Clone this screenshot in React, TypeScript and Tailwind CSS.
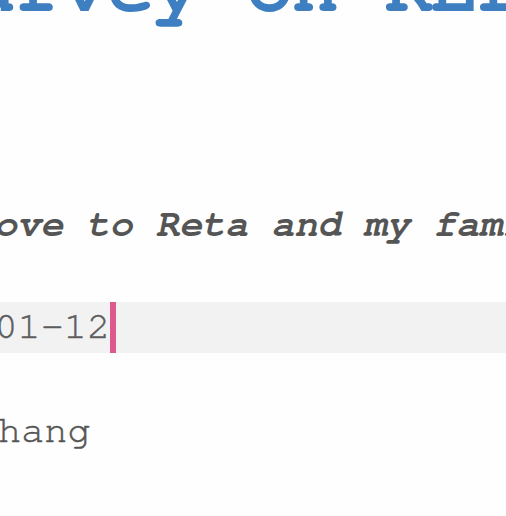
export default function App() {
  return (
    <div className="min-h-screen w-full overflow-hidden bg-[#fefefe] font-['TeX_Gyre_Cursor','FreeMono','Courier_New',monospace] text-[#555]">
      <h1 className="-mt-[58px] -ml-[77px] whitespace-nowrap text-[77px] font-bold leading-none text-[#3d7fc1]">
        Survey on RELATIONSHIPS
      </h1>

      <p className="mt-[178px] -ml-[29px] whitespace-nowrap text-[38.5px] font-bold italic leading-[48px]">
        love to Reta and my family
      </p>

      <div className="mt-[57px] flex h-[51px] items-start bg-[#f2f2f2]">
        <span className="-ml-[121px] whitespace-nowrap text-[38.5px] leading-[46px] text-[#5c5c5c] [-webkit-text-stroke:0.5px_#5c5c5c]">
          2023-01-12
        </span>
        <span className="h-[51px] w-[6px] shrink-0 bg-[#dc5a8e]" />
      </div>

      <p className="mt-[52px] -ml-[25px] whitespace-nowrap text-[38.5px] leading-[48px] [-webkit-text-stroke:0.5px_#555]">
        Zhang
      </p>
    </div>
  );
}
